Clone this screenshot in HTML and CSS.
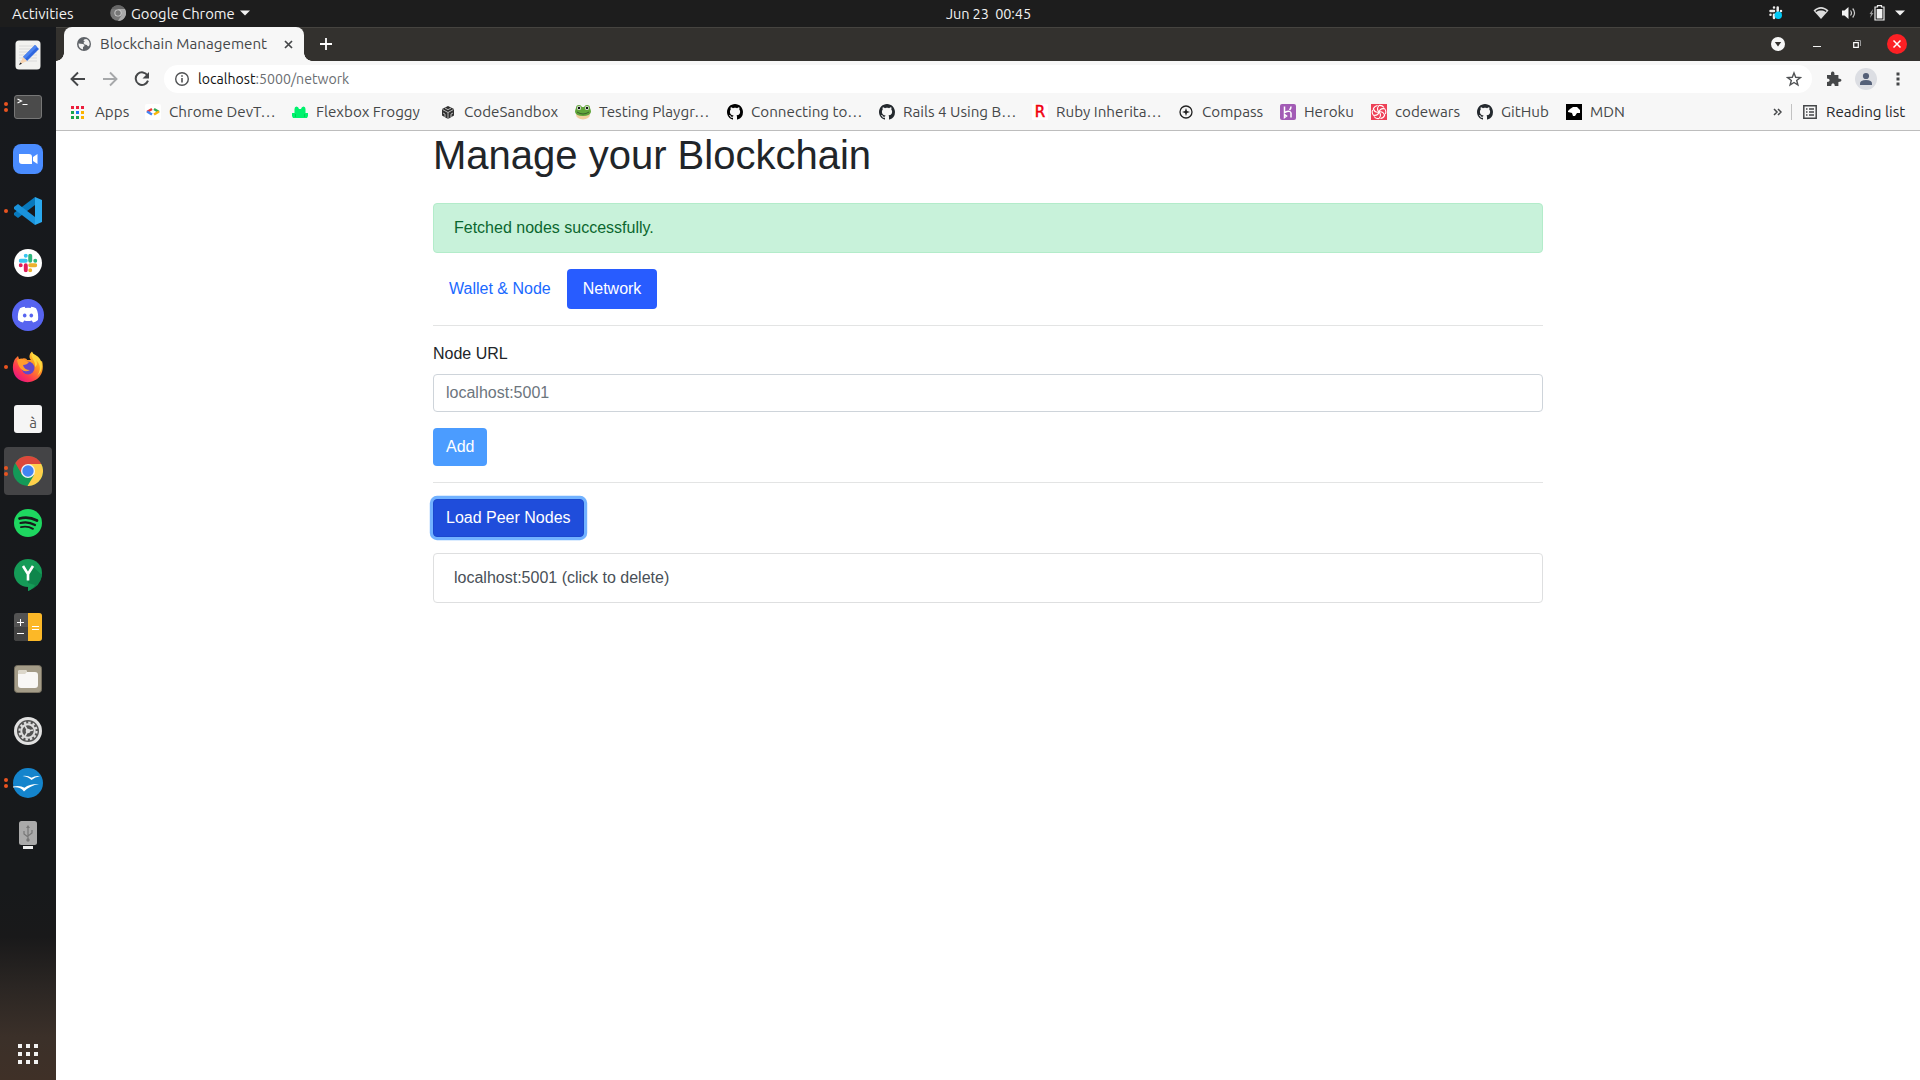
FILE: index.html
```html
<!DOCTYPE html>
<html lang="en">
<head>
<meta charset="utf-8">
<title>Blockchain Management</title>
<link rel="stylesheet" href="styles.css">
</head>
<body>
<svg class="defs" aria-hidden="true">
  <symbol id="octocat" viewBox="0 0 16 16"><path fill-rule="evenodd" d="M8 0C3.58 0 0 3.58 0 8c0 3.54 2.29 6.53 5.47 7.59.4.07.55-.17.55-.38 0-.19-.01-.82-.01-1.49-2.01.37-2.53-.49-2.69-.94-.09-.23-.48-.94-.82-1.13-.28-.15-.68-.52-.01-.53.63-.01 1.08.58 1.23.82.72 1.21 1.87.87 2.33.66.07-.52.28-.87.51-1.07-1.78-.2-3.64-.89-3.64-3.95 0-.87.31-1.59.82-2.15-.08-.2-.36-1.02.08-2.12 0 0 .67-.21 2.2.82.64-.18 1.32-.27 2-.27s1.36.09 2 .27c1.53-1.04 2.2-.82 2.2-.82.44 1.1.16 1.92.08 2.12.51.56.82 1.27.82 2.15 0 3.07-1.87 3.75-3.65 3.95.29.25.54.73.54 1.48 0 1.07-.01 1.93-.01 2.2 0 .21.15.46.55.38A8.01 8.01 0 0 0 16 8c0-4.42-3.58-8-8-8z"/></symbol>
  <symbol id="slack" viewBox="0 0 24 24"><g fill="none" stroke-width="5" stroke-linecap="round"><path stroke="#36c5f0" d="M2.8 9.2h6.4M9.2 2.8h.01"/><path stroke="#2eb67d" d="M14.8 2.8v6.4M21.2 9.2h.01"/><path stroke="#ecb22e" d="M14.8 14.8h6.4M14.8 21.2h.01"/><path stroke="#e01e5a" d="M9.2 14.8v6.4M2.8 14.8h.01"/></g></symbol>
</svg>

<header class="topbar">
  <div class="topbar-left">
    <span class="activities">Activities</span>
    <svg class="app-mark" width="16" height="16" viewBox="0 0 16 16"><circle cx="8" cy="8" r="7.8" fill="#777"/><path d="M8 4h7A8 8 0 0 1 8 16l3.6-6z" fill="#aaa"/><path d="M1.6 4A8 8 0 0 1 15 4H8z" fill="#666"/><circle cx="8" cy="8" r="3.6" fill="#d0d0d0"/><circle cx="8" cy="8" r="2.7" fill="#777"/></svg>
    <span class="app-name">Google Chrome</span>
    <svg class="caret" width="10" height="6" viewBox="0 0 10 6"><path d="M0 .5h10L5 5.5z" fill="#f2f2f2"/></svg>
  </div>
  <div class="clock">Jun 23&nbsp; 00:45</div>
  <div class="topbar-right">
    <svg width="16" height="16" viewBox="0 0 16 16"><g fill="none" stroke="#eee" stroke-width="2.500" stroke-linecap="round"><path d="M2.500 6h3.500M6 2.500v0M9.700 2.500V6M13 6v0M2.500 9.700v0M6 9.700V13"/></g><circle cx="10.300" cy="10.300" r="3.700" fill="#00c8f5"/></svg>
    <svg class="wifi" width="16" height="14" viewBox="0 0 16 14"><path d="M.5 4.500C5-.2 11-.2 15.500 4.500L8 13z" fill="#ddd"/><path d="M2.400 4.900C6 1.900 10 1.900 13.600 4.900l-.9 1C10 4.100 6 4.100 3.300 5.900z" fill="#1d1d1d"/></svg>
    <svg class="volume" width="16" height="14" viewBox="0 0 16 14"><path d="M1 4.500h2.500L7.500 1v12l-4-3.500H1z" fill="#f2f2f2"/><path d="M9.500 4.500q2 2.500 0 5M11.700 2.500q3.700 4.500 0 9" fill="none" stroke="#ccc" stroke-width="1.200"/></svg>
    <svg class="battery" width="16" height="16" viewBox="0 0 16 16"><path d="M4 4L.5 9H2L1 13l3.500-5H3z" fill="#999"/><path d="M8.500 2V.7h4V2H15v13H6V2z" fill="none" stroke="#f2f2f2" stroke-width="1.200"/><path d="M7.700 4h5.700v9.500H7.700z" fill="#f2f2f2"/></svg>
    <svg class="caret" width="10" height="6" viewBox="0 0 10 6"><path d="M0 .5h10L5 5.500z" fill="#f2f2f2"/></svg>
  </div>
</header>

<div class="desktop">
<nav class="dock">
  <div class="dock-item"><svg width="26" height="30" viewBox="0 0 26 30"><rect x=".5" y=".5" width="25" height="29" rx="3.500" fill="#f2f2f0"/><path d="M4 6h18M4 9h18M4 12h18M4 15h18M4 18h18M4 21h18" stroke="#d4d4d4" stroke-width=".8"/><path d="M20 5l4 4L12 21l-4-4z" fill="#2f67df"/><path d="M20 5l2 2L10 19l-2-2z" fill="#4c84f0"/><path d="M8 17l4 4-7.500 3.500z" fill="#f6d3b0"/><path d="M5.300 22.500l1.700 1.200-3 1.300z" fill="#222"/></svg></div>
  <div class="dock-item"><i class="dots two"></i><svg width="28" height="24" viewBox="0 0 28 24"><rect x=".5" y=".5" width="27" height="23" rx="2.500" fill="#4b4b4b" stroke="#777"/><path d="M3.500 4l4 2-4 2M8.500 9.500h5" stroke="#fff" stroke-width="1.200" fill="none"/></svg></div>
  <div class="dock-item"><svg width="30" height="30" viewBox="0 0 30 30"><rect width="30" height="30" rx="8" fill="#4a8cff"/><path d="M6 10h10q3 0 3 3v7H9q-3 0-3-3zM20 13l4.500-3v10L20 17z" fill="#fff"/></svg></div>
  <div class="dock-item"><i class="dots"></i><svg width="28" height="28" viewBox="0 0 28 28"><path d="M21 0v8L4 21l-4-3v-2z" fill="#0879bd"/><path d="M21 28v-8L4 7 0 10v2z" fill="#1a93dc"/><path d="M21 0l7 3v22l-7 3z" fill="#2aa9ef"/></svg></div>
  <div class="dock-item"><svg width="28" height="28" viewBox="0 0 28 28"><circle cx="14" cy="14" r="14" fill="#fff"/><use href="#slack" x="4.500" y="4.500" width="19" height="19"/></svg></div>
  <div class="dock-item"><svg width="32" height="32" viewBox="0 0 32 32"><circle cx="16" cy="16" r="16" fill="#5764f0"/><path d="M13.300 9l-.6-1.200Q10 8.200 8 9.300C6 12.500 5.500 17 6 21q2.500 2 5 2.600l1.200-2q3.800 1 7.600 0l1.200 2q2.500-.6 5-2.600c.5-4 0-8.500-2-11.700q-2-1.100-4.700-1.500L18.700 9q-2.700-.4-5.400 0z" fill="#fff"/><ellipse cx="12.700" cy="16.600" rx="1.800" ry="2" fill="#5764f0"/><ellipse cx="19.300" cy="16.600" rx="1.800" ry="2" fill="#5764f0"/></svg></div>
  <div class="dock-item"><i class="dots"></i><svg width="32" height="32" viewBox="0 0 32 32"><defs><linearGradient id="fire" x1="1" y1="0" x2=".2" y2="1"><stop offset="0" stop-color="#fff44f"/><stop offset=".4" stop-color="#ff9a1f"/><stop offset=".75" stop-color="#ff3750"/><stop offset="1" stop-color="#e3118a"/></linearGradient></defs><path d="M3 8l3-3 1 3 4-.5C13 7 15 8 15 9h4C16 6 18 2 20 .5 21 5 26 6 28 11l2-1c1.500 5 1 11-2 15-6 8-18 8-24 1C-.5 20 .5 12 3 8z" fill="url(#fire)"/><circle cx="16" cy="17" r="6.500" fill="#6547c8"/><path d="M5 9q5-3 9 1l3 1q-2 3-6 3 1 5 7 5-5 3-9-1-3-3-4-9z" fill="#ff9c2c"/><path d="M20 1c-2 6 4 8 3 15 3-2 2-5 1-7 5 4 5 11 1 16 8-7 5-17 0-20-3-2-4-2-5-4z" fill="#ffd83d"/></svg></div>
  <div class="dock-item"><div class="charmap">à</div></div>
  <div class="dock-item active"><i class="dots two"></i><svg width="30" height="30" viewBox="0 0 30 30"><circle cx="15" cy="15" r="15" fill="#149a58"/><path d="M15 8h13.300A15 15 0 0 1 14.500 30l6.500-11z" fill="#ffd04b"/><path d="M15 15L9 18.500 2.300 7A15 15 0 0 1 28.300 8H15z" fill="#dc483b"/><circle cx="15" cy="15" r="7" fill="#f4f4f4"/><circle cx="15" cy="15" r="5.700" fill="#4285f4"/></svg></div>
  <div class="dock-item"><svg width="28" height="28" viewBox="0 0 28 28"><circle cx="14" cy="14" r="14" fill="#1ed760"/><g fill="none" stroke="#17191a" stroke-linecap="round"><path d="M5.500 9.500q9-2.500 17.500 2" stroke-width="2.700"/><path d="M6.500 14q7.500-2 14.500 2" stroke-width="2.200"/><path d="M7 18.200q6.500-1.500 12 1.700" stroke-width="1.800"/></g></svg></div>
  <div class="dock-item"><svg width="28" height="32" viewBox="0 0 28 32"><circle cx="14" cy="14" r="14" fill="#159b57"/><path d="M18 7l10 9q-1 11-14 16v-9z" fill="#0e854b"/><path d="M14 24v8q5-2 7-6z" fill="#159b57"/><path d="M9 7l5 8v6.500M19 7l-5 8" stroke="#fff" stroke-width="2.600" fill="none"/></svg></div>
  <div class="dock-item"><svg width="28" height="28" viewBox="0 0 28 28"><rect width="28" height="28" rx="3" fill="#535353"/><path d="M14 0h11q3 0 3 3v22q0 3-3 3H14z" fill="#fcb827"/><path d="M0 14h14v14H3q-3 0-3-3z" fill="#424242"/><path d="M3 9.500h7M6.500 6v7M3 20.500h7M18 13.500h7M18 16.500h7" stroke="#fff" stroke-width="1"/></svg></div>
  <div class="dock-item"><svg width="28" height="28" viewBox="0 0 28 28"><rect x=".5" y=".5" width="27" height="27" rx="3" fill="#a49c88" stroke="#777061"/><path d="M4 7q0-2 2-2h5q2 0 2 2h8q3 0 3 3v10q0 3-3 3H7q-3 0-3-3z" fill="#f8f7f5"/><path d="M4 8q0-3 2-3h5q2 0 2 2l-2 2H4z" fill="#dcd7ca"/></svg></div>
  <div class="dock-item"><svg width="28" height="28" viewBox="0 0 28 28"><circle cx="14" cy="14" r="14" fill="#e1e1e1"/><circle cx="14" cy="14" r="11" fill="#535353"/><circle cx="14" cy="14" r="8.500" fill="none" stroke="#ddd" stroke-width="2.200" stroke-dasharray="2.400 2.050"/><circle cx="14" cy="14" r="6.700" fill="none" stroke="#ddd" stroke-width="2"/><path d="M14 14l5-1M14 14l-3-5M14 14l-3 5" stroke="#ddd" stroke-width="1.500"/><circle cx="14" cy="14" r="2.300" fill="#ddd"/></svg></div>
  <div class="dock-item"><i class="dots two"></i><svg width="30" height="30" viewBox="0 0 30 30"><circle cx="15" cy="15" r="15" fill="#1484cc"/><path d="M9.500 8q5-.8 9 1.700 4-2.500 8.500-1.500-5 .5-8.500 3.800Q15 8.500 9.500 8zM0 18.500q7-1.500 11.500 1.200Q17 15.500 26 16q-9 1.500-15 7.500-4-5-11-4z" fill="#fff"/></svg></div>
  <div class="dock-item"><svg width="20" height="30" viewBox="0 0 20 30"><rect x="1" y="1" width="18" height="24" rx="2.500" fill="#aaa"/><path d="M5 26h10v3H5z" fill="#eee"/><g fill="none" stroke="#777" stroke-width="1.200"><path d="M10 7v12M6 11v3l4 3M14 10v3l-4 3"/></g><path d="M10 5l2 3H8z" fill="#777"/><circle cx="10" cy="20" r="1.700" fill="#777"/></svg></div>
  <div class="dock-grid"><svg width="20" height="20" viewBox="0 0 20 20"><path d="M0 0h4v4H0zM8 0h4v4H8zM16 0h4v4h-4zM0 8h4v4H0zM8 8h4v4H8zM16 8h4v4h-4zM0 16h4v4H0zM8 16h4v4H8zM16 16h4v4h-4z" fill="#f2f2f2"/></svg></div>
</nav>

<div class="browser">
  <div class="tabstrip">
    <div class="tab">
      <svg width="14" height="14" viewBox="0 0 14 14"><circle cx="7" cy="7" r="7" fill="#5f6368"/><path d="M1.500 6.500L6 7q1.500.5 1.500 2L6 10v2.500Q1.500 11.500 1.500 6.500zM7 2.500q3-1.500 4.500 1 2 3 .5 5.500Q10.500 10 10 8 7 8 6.500 6 6.500 5 8 4.500L6.500 4z" fill="#f3f3f3"/></svg>
      <span class="tab-title">Blockchain Management</span>
      <svg width="9" height="9" viewBox="0 0 9 9"><path d="M1 1l7 7M8 1L1 8" stroke="#454749" stroke-width="1.700"/></svg>
    </div>
    <svg class="new-tab" width="12" height="12" viewBox="0 0 12 12"><path d="M6 0v12M0 6h12" stroke="#fff" stroke-width="1.800"/></svg>
    <div class="win-controls">
      <svg width="14" height="14" viewBox="0 0 14 14"><circle cx="7" cy="7" r="7" fill="#f7f7f7"/><path d="M3.800 5h6.400L7 9.500z" fill="#33312e"/></svg>
      <svg width="8" height="6" viewBox="0 0 8 6"><path d="M0 5.500h8" stroke="#f2f2f2"/></svg>
      <svg width="8" height="8" viewBox="0 0 8 8"><path d="M.7 2.700h4.600v4.600H.7z" stroke="#fff" stroke-width="1.200" fill="none"/><path d="M2 .5h5.500V6" fill="none" stroke="#999"/></svg>
      <svg width="20" height="20" viewBox="0 0 20 20"><circle cx="10" cy="10" r="10" fill="#fc2024"/><path d="M6.500 6.500l7 7M13.500 6.500l-7 7" stroke="#fff" stroke-width="1.500"/></svg>
    </div>
  </div>

  <div class="toolbar">
    <svg width="16" height="16" viewBox="0 0 16 16"><path d="M15 8H2M8 1.500L1.500 8 8 14.500" fill="none" stroke="#454749" stroke-width="1.900"/></svg>
    <svg width="16" height="16" viewBox="0 0 16 16"><path d="M1 8h13M8 1.500L14.500 8 8 14.500" fill="none" stroke="#a6a8aa" stroke-width="1.900"/></svg>
    <svg width="16" height="16" viewBox="0 0 16 16"><path d="M13.500 4.500A6.300 6.300 0 1 0 14 9.700" fill="none" stroke="#454749" stroke-width="2"/><path d="M15 1v6.500H8.500z" fill="#454749"/></svg>
    <div class="omnibox">
      <svg width="14" height="14" viewBox="0 0 14 14"><circle cx="7" cy="7" r="6.300" fill="none" stroke="#505254" stroke-width="1.400"/><path d="M7 6v4.500M7 3.300v1.500" stroke="#505254" stroke-width="1.600"/></svg>
      <span class="url"><b>localhost</b>:5000/network</span>
      <svg class="star" width="16" height="16" viewBox="0 0 16 16"><path d="M8 2l1.700 4.300 4.600.3-3.600 2.900 1.200 4.500L8 11.500 4.100 14l1.200-4.500-3.600-2.900 4.600-.3z" fill="none" stroke="#505254" stroke-width="1.400"/></svg>
    </div>
    <svg class="puzzle" width="16" height="16" viewBox="0 0 16 16"><path d="M1 4h4q-.5-3.500 1.700-3.500T8.400 4h4v3.500q3 0 3 1.700t-3 1.700V15H8.800q0-2.700-1.800-2.700T5.200 15H1v-4q2.700 0 2.700-1.700T1 7.500z" fill="#454749"/></svg>
    <svg class="avatar" width="22" height="22" viewBox="0 0 22 22"><circle cx="11" cy="11" r="11" fill="#dcdee3"/><circle cx="11" cy="8" r="3.100" fill="#546078"/><path d="M5 17v-1.500q0-3.500 6-3.500t6 3.500V17z" fill="#546078"/></svg>
    <svg class="more" width="4" height="14" viewBox="0 0 4 14"><path d="M.5.500h3v3h-3zM.5 5.500h3v3h-3zM.5 10.500h3v3h-3z" fill="#454749"/></svg>
  </div>

  <div class="bookmarks">
    <div class="bookmark"><svg viewBox="0 0 16 16"><path d="M0 2h3v3H0zM5 2h3v3H5zM10 2h3v3h-3z" fill="#ec1f3c"/><path d="M0 7h3v3H0zM0 12h3v3H0zM5 12h3v3H5z" fill="#18a34a"/><path d="M5 7h3v3H5z" fill="#1877f2"/><path d="M10 7h3v3h-3zM10 12h3v3h-3z" fill="#fbb300"/></svg><span>Apps</span></div>
    <div class="bookmark"><svg viewBox="0 0 16 16"><rect width="16" height="16" rx="2" fill="#fff"/><g fill="none" stroke-width="2.500"><path d="M7 5L2 8" stroke="#ea3a35"/><path d="M2 7.500l5 3" stroke="#4285f4"/><path d="M9 5l5 3" stroke="#34a853"/><path d="M14 7.500l-5 3" stroke="#fbb60b"/></g></svg><span>Chrome DevT…</span></div>
    <div class="bookmark"><svg viewBox="0 0 16 16"><path d="M2.500 5q0-2.500 2-2.500T7 5h2q.5-2.500 2.500-2.500t2 2.500v4H16v3l-1 2H1l-1-2V9h2.500z" fill="#00f26d"/><path d="M3.500 10v3M12.500 10v3" stroke="#00ce58"/></svg><span>Flexbox Froggy</span></div>
    <div class="bookmark sandbox"><svg viewBox="0 0 16 16"><path d="M8 2l6 3v6.500L8 15l-6-3.500V5z" fill="#303030"/><path d="M2.500 5.500L8 8.500l5.500-3M8 8.500V15M5 4l3 1.700L11 4M3 9l2 1v3M13 9l-2 1v3" fill="none" stroke="#c8c8c8" stroke-width=".9"/></svg><span>CodeSandbox</span></div>
    <div class="bookmark"><svg viewBox="0 0 16 16"><ellipse cx="8" cy="10.500" rx="7" ry="5" fill="#f0cf9e"/><path d="M1 4q0-3 3-3 2 0 3 2h2q1-2 3-2 3 0 3 3 1 2 1 4-1 4-8 4T0 8q0-2 1-4z" fill="#62a63b"/><circle cx="4" cy="4" r="2" fill="#fff"/><circle cx="12" cy="4" r="2" fill="#fff"/><circle cx="4" cy="4" r="1.300" fill="#111"/><circle cx="12" cy="4" r="1.300" fill="#111"/><path d="M2 8q6 4 12 0" fill="none" stroke="#3b622b"/></svg><span>Testing Playgr…</span></div>
    <div class="bookmark"><svg viewBox="0 0 16 16"><use href="#octocat" fill="#000"/></svg><span>Connecting to…</span></div>
    <div class="bookmark"><svg viewBox="0 0 16 16"><use href="#octocat" fill="#24292e"/></svg><span>Rails 4 Using B…</span></div>
    <div class="bookmark"><div class="letter-icon">R</div><span>Ruby Inherita…</span></div>
    <div class="bookmark"><svg viewBox="0 0 16 16"><circle cx="8" cy="8" r="6" fill="none" stroke="#222" stroke-width="1.300"/><path d="M8 4l1 3 3 1-3 1-1 3-1-3-3-1 3-1z" fill="#222"/></svg><span>Compass</span></div>
    <div class="bookmark"><svg viewBox="0 0 16 16"><rect width="16" height="16" rx="2" fill="#a25bb5"/><path d="M4.500 2.500v6q6-2.500 6.500.5v4.500M11 2.500q0 2-1.500 3.500M4.500 10.500v3l2-1.500z" fill="none" stroke="#fff" stroke-width="1.500"/></svg><span>Heroku</span></div>
    <div class="bookmark"><svg viewBox="0 0 16 16"><path d="M0 0h16v16H0z" fill="#ee4056"/><g fill="none" stroke="#fff" stroke-width="1.100"><path id="blade" d="M8 8Q5 5 8 1.500q3-.5 5 2"/><use href="#blade" transform="rotate(60 8 8)"/><use href="#blade" transform="rotate(120 8 8)"/><use href="#blade" transform="rotate(180 8 8)"/><use href="#blade" transform="rotate(240 8 8)"/><use href="#blade" transform="rotate(300 8 8)"/></g></svg><span>codewars</span></div>
    <div class="bookmark"><svg viewBox="0 0 16 16"><use href="#octocat" fill="#24292e"/></svg><span>GitHub</span></div>
    <div class="bookmark"><svg viewBox="0 0 16 16"><path d="M0 0h16v16H0z"/><path d="M2 7l2-2 3-2h4l3 3v3h-3l-2 3H7l-1-3-4-1z" fill="#fff"/></svg><span>MDN</span></div>
    <div class="bookmark-end">
      <svg width="9" height="8" viewBox="0 0 9 8"><path d="M1 1l3 3-3 3M5 1l3 3-3 3" fill="none" stroke="#454749" stroke-width="1.500"/></svg>
      <i class="sep"></i>
      <svg width="14" height="14" viewBox="0 0 14 14"><path d="M.8.800h12.400v12.400H.8z" fill="none" stroke="#454749" stroke-width="1.500"/><path d="M3 4h1.500M6 4h5M3 7h1.500M6 7h5M3 10h1.500M6 10h5" stroke="#454749" stroke-width="1.500"/></svg>
      <span class="reading">Reading list</span>
    </div>
  </div>

  <main class="page">
    <div class="container">
      <h1>Manage your Blockchain</h1>
      <div class="alert">Fetched nodes successfully.</div>
      <div class="pills"><a class="pill">Wallet &amp; Node</a><a class="pill selected">Network</a></div>
      <hr>
      <label class="field-label" for="node-url">Node URL</label>
      <input class="field" id="node-url" type="text" placeholder="localhost:5001">
      <button class="btn disabled">Add</button>
      <hr>
      <button class="btn focused">Load Peer Nodes</button>
      <div class="list-item">localhost:5001 (click to delete)</div>
    </div>
  </main>
</div>
</div>
</body>
</html>
```
FILE: styles.css
```css
* { box-sizing: border-box; }
body { margin: 0; width: 1920px; height: 1080px; overflow: hidden; background: #fff; font-family: Ubuntu, "Noto Sans", sans-serif; font-size: 15.2px; }
svg { display: block; flex: none; }
.defs { position: absolute; width: 0; height: 0; }

.topbar { height: 27px; background: #1d1d1d; color: #f2f2f2; display: grid; grid-template-columns: 934px auto 1fr; align-items: center; padding: 0 15px 1px 12px; font-size: 15px; white-space: nowrap; }
.topbar-left, .topbar-right { display: flex; align-items: center; }
.activities { width: 98px; }
.app-name { width: 110px; padding-left: 5px; margin-right: 4px; font-size: 14.8px; }
.clock { font-size: 14.5px; letter-spacing: -.1px; }
.topbar-right { justify-content: flex-end; }
.wifi { margin-left: 29px; }
.volume { margin-left: 12px; }
.battery { margin-left: 12px; }
.topbar-right .caret { margin-left: 10px; }

.desktop { display: flex; height: 1053px; }
.dock { width: 56px; flex: none; display: flex; flex-direction: column; padding: 2px 4px 16px; background: linear-gradient(#17191d 0, #17191b 860px, #19191a 910px, #2b2623 960px, #3b3029 1010px, #3f3027 1053px); }
.dock-item { position: relative; height: 48px; margin: 2px 0; display: flex; align-items: center; justify-content: center; border-radius: 4px; }
.dock-item.active { background: #444446; }
.dots { position: absolute; left: 0; top: 22px; width: 4px; height: 4px; border-radius: 50%; background: #e95420; }
.dots.two { top: 19px; box-shadow: 0 6px #e95420; }
.charmap { width: 28px; height: 28px; border-radius: 3px; background: #f5f5f5; color: #555; font-size: 15px; line-height: 36px; text-align: right; padding-right: 5px; }
.dock-grid { margin-top: auto; display: flex; justify-content: center; }

.browser { flex: 1; display: flex; flex-direction: column; }
.tabstrip { height: 34px; background: #33312e; box-shadow: inset 0 1px #464440; display: flex; align-items: center; padding: 0 13px 0 8px; }
.tab { position: relative; width: 240px; height: 34px; background: #f7f7f7; border-radius: 8px 8px 0 0; display: flex; align-items: center; padding: 0 11px 0 13px; color: #454749; }
.tab::before, .tab::after { content: ""; position: absolute; bottom: 0; width: 8px; height: 8px; }
.tab::before { left: -8px; background: radial-gradient(circle at 0 0, transparent 7.5px, #f7f7f7 8px); }
.tab::after { right: -8px; background: radial-gradient(circle at 100% 0, transparent 7.5px, #f7f7f7 8px); }
.tab-title { flex: 1; padding-left: 9px; white-space: nowrap; line-height: 18px; }
.new-tab { margin-left: 16px; }
.win-controls { margin-left: auto; display: flex; align-items: center; }
.win-controls svg:nth-child(2) { margin-left: 28px; }
.win-controls svg:nth-child(3) { margin-left: 32px; }
.win-controls svg:nth-child(4) { margin-left: 26px; }

.toolbar { height: 36px; background: #f7f7f7; display: flex; align-items: center; padding: 0 20px 0 14px; }
.toolbar > svg + svg { margin-left: 16px; }
.omnibox { margin-left: 14px; width: 1648px; height: 28px; border-radius: 14px; background: #fff; display: flex; align-items: center; padding: 0 10px 0 11px; }
.url { padding-left: 9px; color: #6a6d71; font-size: 14.15px; }
.url b { font-weight: 400; color: #111; }
.star { margin-left: auto; }
.toolbar > .puzzle { margin-left: 14px; }
.toolbar > .avatar { margin-left: 13px; }
.toolbar > .more { margin-left: 19px; }

.bookmarks { height: 34px; background: #f7f7f7; border-bottom: 1px solid #bdbdbd; display: grid; grid-template-columns: 74px 147px 147px 136px 152px 152px 153px 146px 102px 91px 106px 89px 1fr auto; align-items: center; padding: 0 14px 3px 15px; color: #454749; white-space: nowrap; }
.bookmark { display: flex; align-items: center; gap: 8px; line-height: 20px; }
.bookmark.sandbox { padding-left: 1px; }
.bookmark svg { width: 16px; height: 16px; }
.letter-icon { width: 16px; height: 16px; background: #fff; color: #f00010; font: 15px/16px "DejaVu Sans", sans-serif; -webkit-text-stroke: .5px #f00010; text-align: center; }
.bookmark-end { display: flex; align-items: center; color: #27292b; line-height: 20px; }
.sep { width: 1px; height: 16px; background: #c2c2c2; margin: 0 11px 0 9px; }
.reading { width: 80px; margin-left: 9px; }

.page { flex: 1; background: #fff; font: 16px/24px "Liberation Sans", Arial, sans-serif; color: #212529; }
.container { width: 1110px; margin: 0 auto; }
h1 { font-size: 40px; line-height: 48px; font-weight: 500; margin: 0 0 24px; }
.alert { border: 1px solid #b3ecca; background: #c8f2da; color: #0b672f; border-radius: 4px; padding: 12px 20px; margin-bottom: 16px; }
.pills { display: flex; }
.pill { padding: 8px 16px; border-radius: 4px; color: #1a69ff; }
.pill.selected { background: #285cff; color: #fff; }
hr { height: 1px; border: 0; margin: 16px 0; background: #e3e4e4; }
.field-label { display: block; margin-bottom: 8px; }
.field { display: block; width: 100%; height: 38px; border: 1px solid #ced4da; border-radius: 4px; padding: 6px 12px; font: inherit; margin-bottom: 16px; }
.field::placeholder { color: #6c757d; opacity: 1; }
.btn { display: block; height: 38px; border: 1px solid transparent; border-radius: 4px; padding: 6px 12px; font: inherit; color: #fff; }
.btn.disabled { background: #4b9cff; }
.btn.focused { background: #1f4ddb; border-color: #1a48cd; box-shadow: 0 0 0 3.2px #72b2ff; margin-bottom: 16px; }
.list-item { border: 1px solid #dedfe0; border-radius: 4px; padding: 12px 20px; color: #495057; }
```
